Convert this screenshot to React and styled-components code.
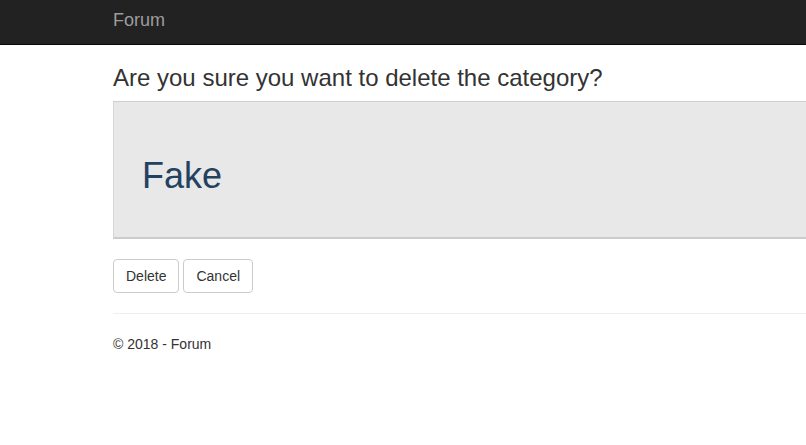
import React from "react";
import styled, { createGlobalStyle } from "styled-components";

const Global = createGlobalStyle`
  html, body { margin: 0; padding: 0; background: #fff; }
  body {
    font-family: "Liberation Sans", Arial, Helvetica, sans-serif;
    font-size: 14px;
    line-height: 1.42857;
    color: #333;
    overflow: hidden;
  }
`;

const Navbar = styled.header`
  height: 44px;
  background: #222;
  border-bottom: 1px solid #080808;
  display: flex;
  align-items: center;
  padding-left: 113px;
`;

const Brand = styled.a`
  color: #9d9d9d;
  font-size: 18px;
  line-height: 20px;
  text-decoration: none;
  margin-top: -4px;
`;

const Container = styled.main`
  padding-left: 113px;
  width: 1000px;
`;

const Heading = styled.h2`
  margin: 20px 0 10px;
  font-size: 24px;
  font-weight: 400;
  line-height: 1.1;
  color: #333;
`;

const Jumbotron = styled.section`
  background: #e8e8e8;
  border-top: 1px solid #cfcfcf;
  border-left: 1px solid #d6d6d6;
  border-bottom: 2px solid #cccccc;
  padding: 34px 30px 41px 28px;
  margin-bottom: 20px;
`;

const Title = styled.h1`
  margin: 20px 0 0;
  font-size: 36px;
  font-weight: 400;
  line-height: 1.1;
  color: #234161;
`;

const Actions = styled.div`
  display: flex;
  gap: 4px;
`;

const Button = styled.button`
  font-family: inherit;
  font-size: 14px;
  line-height: 20px;
  color: #333;
  background: #fff;
  border: 1px solid #ccc;
  border-radius: 4px;
  padding: 6px 12px;
  height: 34px;
`;

const Rule = styled.hr`
  margin: 20px 0;
  border: 0;
  border-top: 1px solid #eee;
`;

const Footer = styled.footer`
  padding-top: 1px;
  p { margin: 0; }
`;

export default function App() {
  return (
    <>
      <Global />
      <Navbar>
        <Brand href="#">Forum</Brand>
      </Navbar>
      <Container>
        <Heading>Are you sure you want to delete the category?</Heading>
        <Jumbotron>
          <Title>Fake</Title>
        </Jumbotron>
        <Actions>
          <Button>Delete</Button>
          <Button>Cancel</Button>
        </Actions>
        <Rule />
        <Footer>
          <p>© 2018 - Forum</p>
        </Footer>
      </Container>
    </>
  );
}
